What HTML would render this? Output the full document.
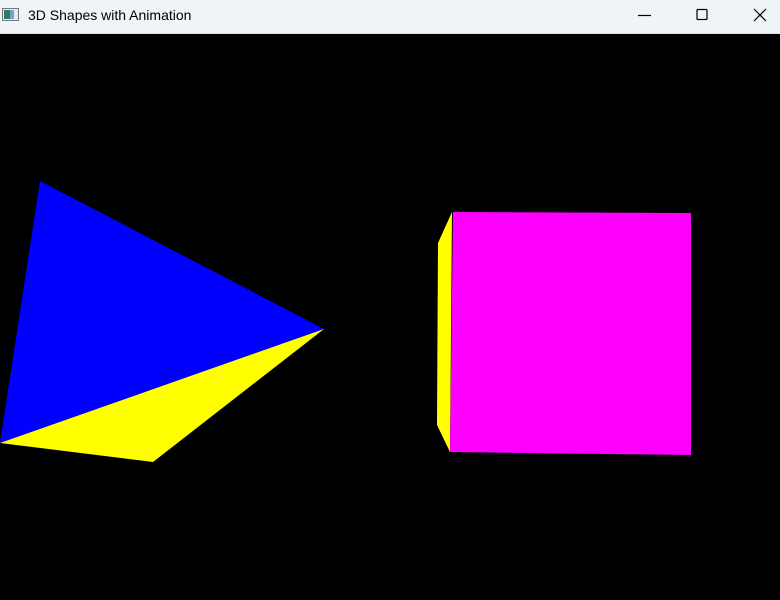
<!DOCTYPE html>
<html><head><style>
body{margin:0;width:780px;height:600px;overflow:hidden;background:#000;font-family:"Liberation Sans",sans-serif}
.tb{position:absolute;left:0;top:0;width:780px;height:33px;background:#eef4f7;border-bottom:1px solid #dde4e8}
.t{position:absolute;left:28px;top:7px;font-size:14px;color:#000}
</style></head><body>
<div class="tb">
<svg style="position:absolute;left:2px;top:8px" width="18" height="14"><rect x="0.5" y="0.5" width="16" height="12" fill="#e8ecee" stroke="#777"/><rect x="2" y="2" width="6" height="9" fill="#2f7a62"/><rect x="8" y="2" width="4" height="9" fill="#6aa7c9"/></svg>
<div class="t">3D Shapes with Animation</div>
<svg style="position:absolute;left:630px;top:0" width="150" height="33" fill="none" stroke="#000" stroke-width="1.2">
<line x1="8" y1="15.5" x2="21" y2="15.5"/>
<rect x="67" y="9.5" width="10" height="10" rx="1"/>
<line x1="124" y1="9" x2="136" y2="21"/><line x1="136" y1="9" x2="124" y2="21"/>
</svg>
</div>
<svg style="position:absolute;left:0;top:0" width="780" height="600">
<polygon points="40,181 324,329 0,443" fill="#0000ff"/>
<polygon points="0,443 324,329 153,462" fill="#ffff00"/>
<polygon points="452,212 438,243 437,425 450,452" fill="#ffff00"/>
<polygon points="453,212 691,213 691,455 450,452" fill="#ff00ff"/>
</svg>
</body></html>
